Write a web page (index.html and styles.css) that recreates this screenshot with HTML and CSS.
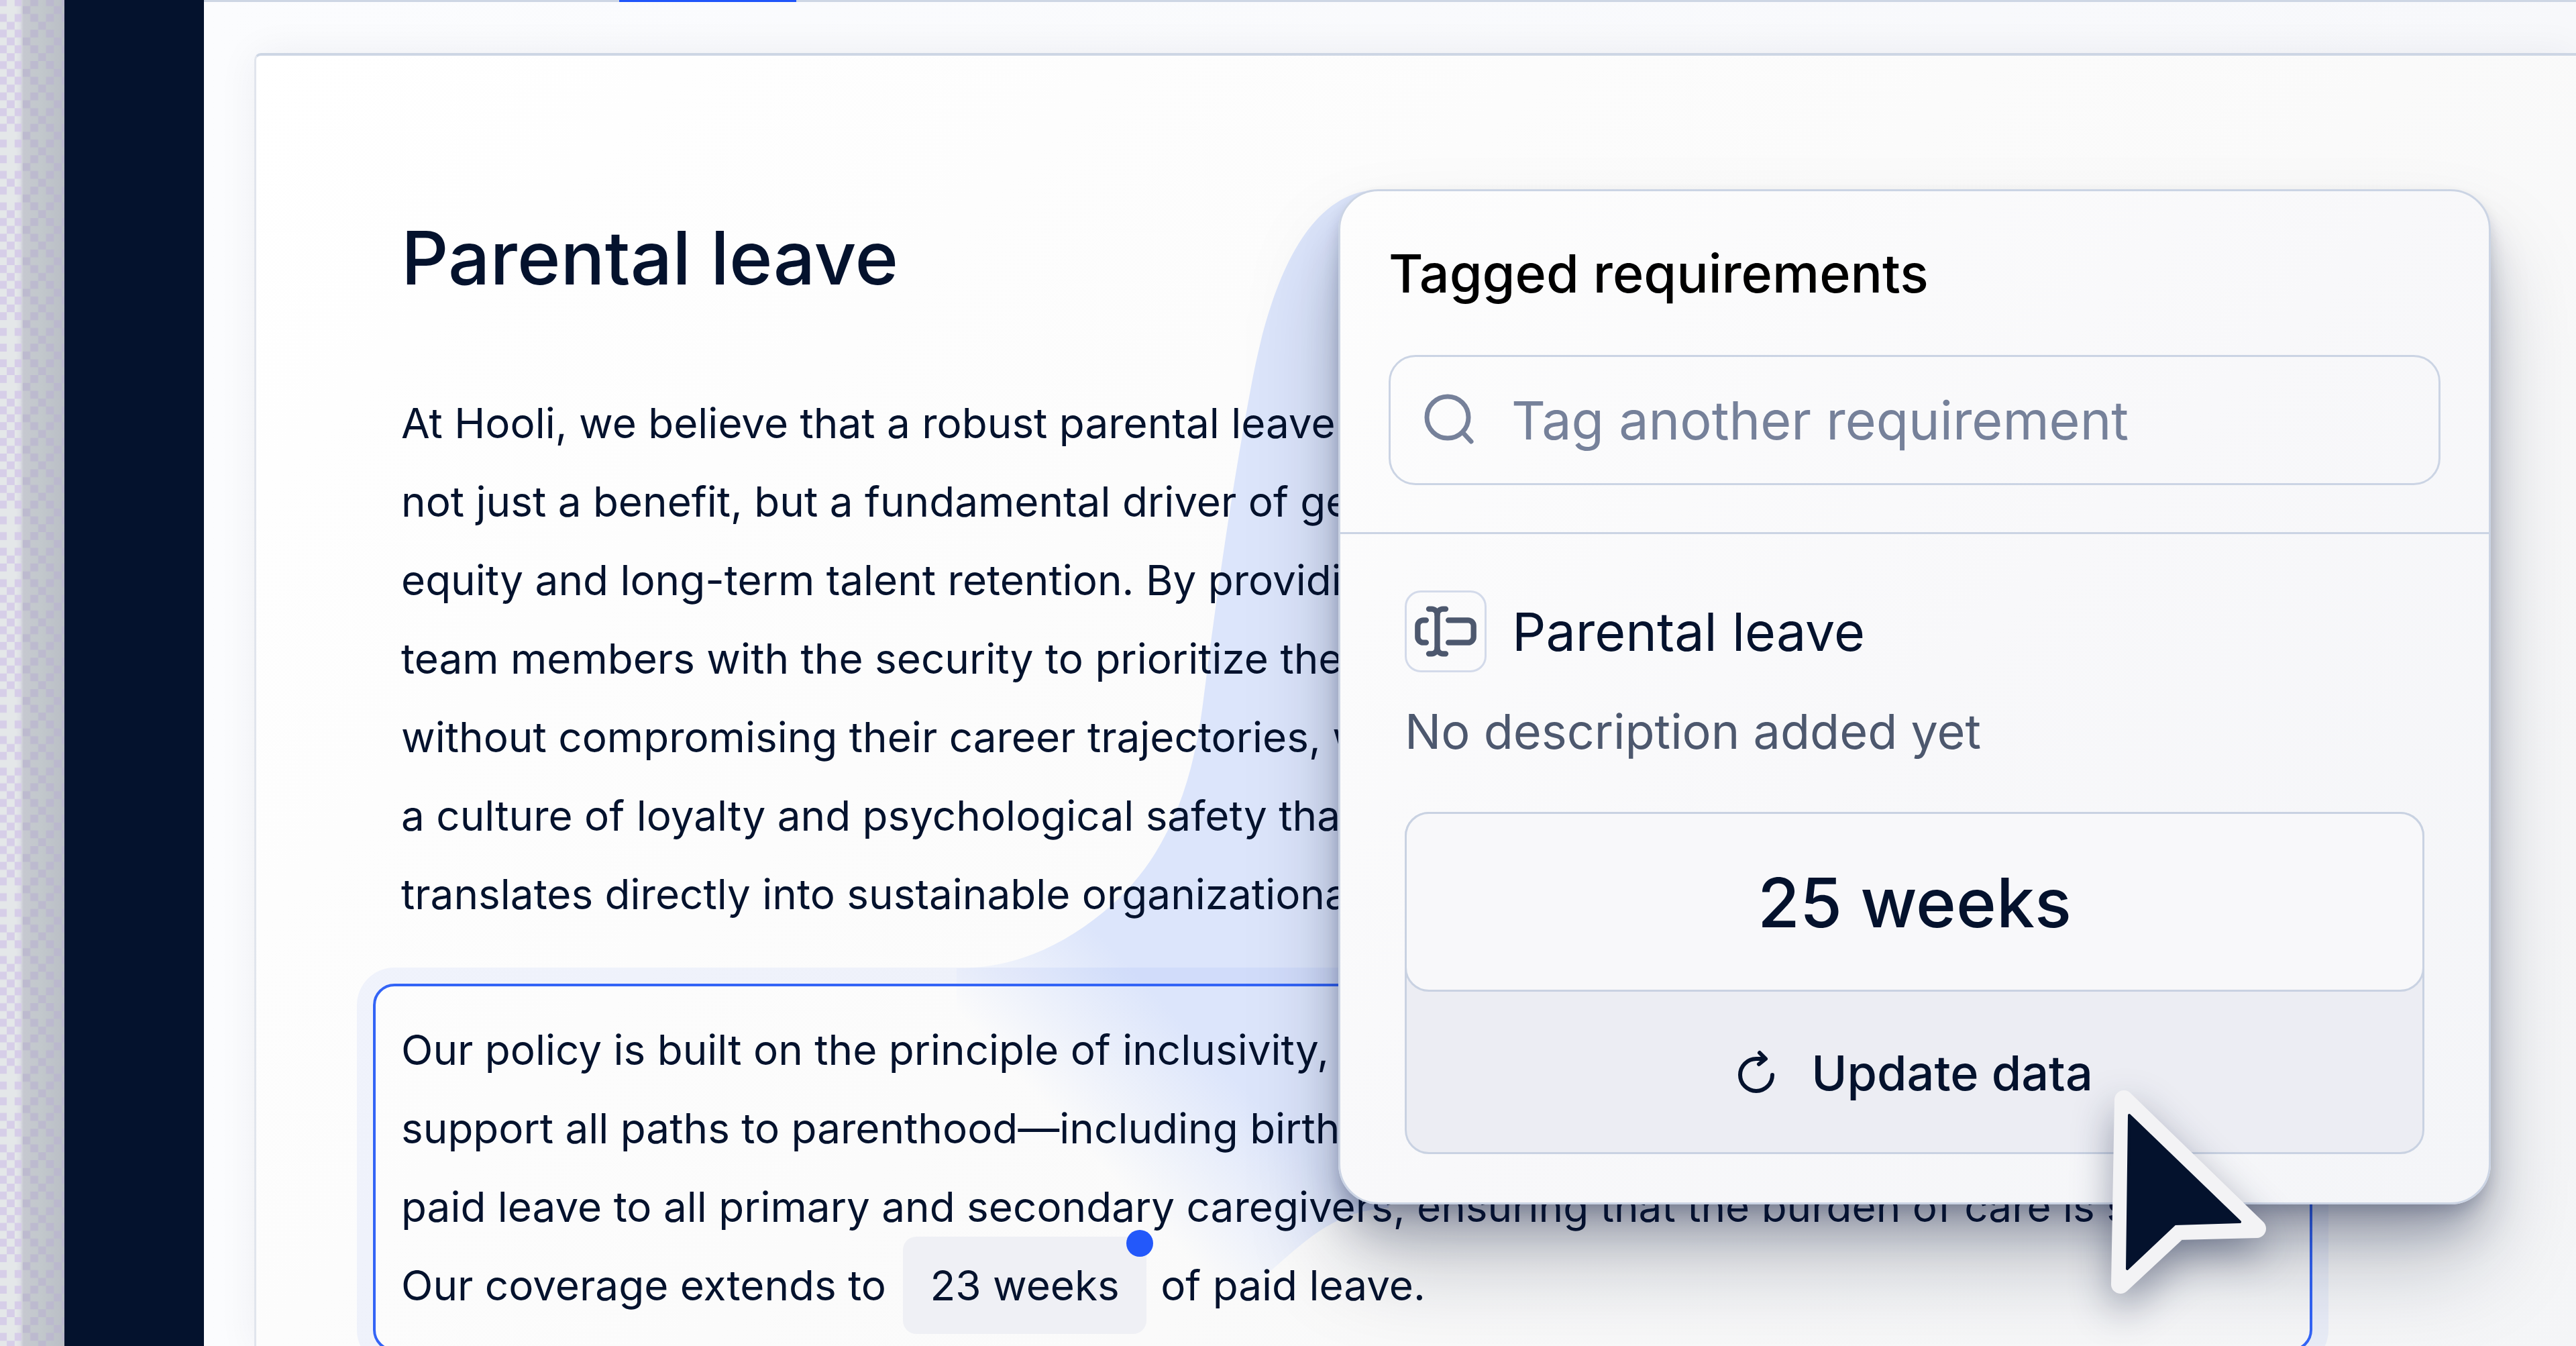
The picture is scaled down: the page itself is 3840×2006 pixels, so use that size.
FILE: index.html
```html
<!DOCTYPE html>
<html lang="en">
<head>
<meta charset="utf-8">
<title>Parental leave</title>
<link rel="stylesheet" href="styles.css">
</head>
<body>
<div class="app">
  <div class="backdrop">
    <svg class="checker" width="96" height="100%" aria-hidden="true">
      <defs>
        <pattern id="light" width="23.4" height="280.8" patternUnits="userSpaceOnUse" x="-1.6" y="-2.6">
          <path fill="#d4c9e8" d="M0 0h11.7v11.7H0zM0 23.4h11.7v11.7H0zM0 46.8h11.7v11.7H0zM0 70.2h11.7v11.7H0zM0 93.6h11.7v11.7H0zM0 117h11.7v11.7H0zM0 140.4h11.7v11.7H0zM0 163.8h11.7v11.7H0zM0 187.2h11.7v11.7H0zM0 210.6h11.7v11.7H0zM0 234h11.7v11.7H0zM0 257.4h11.7v11.7H0zM11.7 35.1h11.7v11.7H11.7zM11.7 58.5h11.7v11.7H11.7zM11.7 81.9h11.7v11.7H11.7zM11.7 105.3h11.7v11.7H11.7zM11.7 128.7h11.7v11.7H11.7zM11.7 152.1h11.7v11.7H11.7zM11.7 175.5h11.7v11.7H11.7zM11.7 269.1h11.7v11.7H11.7z"/>
        </pattern>
        <pattern id="dark" width="46.8" height="46.8" patternUnits="userSpaceOnUse" x="33.5" y="-2.6">
          <path fill="#bab5cf" d="M11.7 0h11.7v11.7H11.7zM35.1 0h11.7v11.7H35.1zM11.7 23.4h11.7v11.7H11.7zM35.1 23.4h11.7v11.7H35.1zM0 11.7h11.7v11.7H0zM23.4 35.1h11.7v11.7H23.4z"/>
        </pattern>
      </defs>
      <rect width="32" height="100%" fill="url(#light)" opacity=".85"/>
      <rect x="34" width="62" height="100%" fill="url(#dark)" opacity=".75"/>
    </svg>
  </div>
  <aside class="sidebar"></aside>
  <main class="main">
    <div class="tabs"><span class="tab-active"></span></div>
    <article class="sheet">
      <svg class="connector" width="1700" height="1760" viewBox="380 260 1700 1760" aria-hidden="true">
        <defs>
          <linearGradient id="fade" gradientUnits="userSpaceOnUse" x1="1560" y1="1650" x2="1730" y2="1490">
            <stop offset="0" stop-color="#dce5fb" stop-opacity="0"/>
            <stop offset="1" stop-color="#dce5fb"/>
          </linearGradient>
        </defs>
        <path fill="url(#fade)" d="M2050 283C1940 290 1890 440 1865 576C1834 740 1811 908 1793 1050C1775 1190 1730 1290 1644 1360C1580 1412 1510 1443 1426 1443V1940H1840C1930 1870 1970 1806 2070 1800V283Z"/>
      </svg>
      <h1 class="title">Parental leave</h1>
      <p class="copy">At Hooli, we believe that a robust parental leave<br>not just a benefit, but a fundamental driver of gender<br>equity and long-term talent retention. By providing<br>team members with the security to prioritize the<br>without compromising their career trajectories, we<br>a culture of loyalty and psychological safety that<br>translates directly into sustainable organizational</p>
      <p class="copy selected">Our policy is built on the principle of inclusivity, made<br>support all paths to parenthood—including birth<br>paid leave to all primary and secondary caregivers, ensuring that the burden of care is share<br>Our coverage extends to <span class="chip">23 weeks<span class="dot"></span></span> of paid leave.</p>

      <section class="popover">
        <header class="popover-head">
          <h2 class="popover-title">Tagged requirements</h2>
          <label class="search">
            <svg class="search-icon" width="84" height="84" viewBox="0 0 84 84" fill="none" stroke="currentColor" stroke-width="7" stroke-linecap="round" aria-hidden="true"><circle cx="37" cy="38" r="31"/><path d="M60 61L72 74"/></svg>
            <input class="search-input" type="text" placeholder="Tag another requirement" aria-label="Tag another requirement">
          </label>
        </header>
        <div class="requirement">
          <div class="req-head">
            <span class="req-icon">
              <svg width="100" height="100" viewBox="0 0 24 24" fill="none" stroke="currentColor" stroke-width="2" stroke-linecap="round" stroke-linejoin="round" aria-hidden="true"><path d="M12 20h-1a2 2 0 0 1-2-2 2 2 0 0 1-2 2H6"/><path d="M13 8h7a2 2 0 0 1 2 2v4a2 2 0 0 1-2 2h-7"/><path d="M5 16H4a2 2 0 0 1-2-2v-4a2 2 0 0 1 2-2h1"/><path d="M6 4h1a2 2 0 0 1 2 2 2 2 0 0 1 2-2h1"/><path d="M9 6v12"/></svg>
            </span>
            <h3 class="req-name">Parental leave</h3>
          </div>
          <p class="req-desc">No description added yet</p>
          <div class="value-card">
            <div class="value">25 weeks</div>
            <button class="update" type="button">
              <svg width="60" height="68" viewBox="0 0 60 68" fill="none" stroke="currentColor" stroke-width="6" stroke-linecap="round" stroke-linejoin="round" aria-hidden="true"><path d="M54 38A24 24 0 1 1 30 14H42"/><path d="M35 5L44 14L34 22"/></svg>
              <span>Update data</span>
            </button>
          </div>
        </div>
      </section>

      <svg class="pointer" width="300" height="360" viewBox="3120 1600 300 360" aria-hidden="true">
        <path d="M3166 1639L3364 1831L3247 1834L3161 1914Z" fill="#f3f3f5" stroke="#f3f3f5" stroke-width="28" stroke-linejoin="round"/>
        <path d="M3174 1662L3339 1821L3242 1824L3171 1891Z" fill="#04122d" stroke="#04122d" stroke-width="4" stroke-linejoin="round"/>
      </svg>
    </article>
  </main>
</div>
</body>
</html>
```
FILE: styles.css
```css
* { box-sizing: border-box; margin: 0; padding: 0; }

body {
  font-family: Inter, "Liberation Sans", sans-serif;
  color: #04122d;
}

.app {
  display: flex;
  height: 100vh;
  overflow: hidden;
}

.backdrop {
  flex: 0 0 96px;
  background: linear-gradient(90deg, #e4e7e9 0 24px, #dddfe5 30px, #c6c8d0 35px, #c2c8cc 60px, #babec6 96px);
}

.checker { display: block; }

.sidebar {
  flex: 0 0 208px;
  background: #04122d;
}

.main {
  flex: 1;
  min-width: 0;
  display: flex;
  flex-direction: column;
  background: linear-gradient(90deg, #fbfcfe, #f7f8fb);
}

.tabs {
  flex: none;
  display: flex;
  height: 3px;
  padding-left: 619px;
  background: #cdd6e4;
}

.tab-active {
  width: 264px;
  background: #1f55fa;
}

.sheet {
  position: relative;
  flex: 1 0 auto;
  margin: 76px 0 0 75px;
  padding: 233px 393px 0 174px;
  border-top: 4px solid #cdd6e4;
  border-left: 3px solid #e1e5ed;
  border-top-left-radius: 10px;
  background: linear-gradient(135deg, #ffffff, #fafafa 60%, #f4f5f7);
  box-shadow: 0 0 60px rgba(20, 30, 60, 0.06);
}

.connector {
  position: absolute;
  left: -2px;
  top: 177px;
}

.title {
  position: relative;
  padding-left: 42px;
  font-size: 110px;
  line-height: 136px;
  font-weight: 500;
}

.copy {
  position: relative;
  margin-top: 120px;
  padding-left: 42px;
  font-size: 62px;
  line-height: 117px;
  white-space: nowrap;
}

.selected {
  margin-top: 75px;
  padding: 36px 38px;
  border: 4px solid #3364f6;
  border-radius: 32px;
  box-shadow: 0 0 0 24px rgba(37, 90, 245, 0.06);
}

.chip {
  position: relative;
  margin: 0 4px 0 8px;
  padding: 35px 40px;
  border-radius: 20px;
  background: #eff0f5;
}

.dot {
  position: absolute;
  top: -10px;
  right: -10px;
  width: 40px;
  height: 40px;
  border-radius: 50%;
  background: #2358fa;
}

.popover {
  position: absolute;
  left: 1613px;
  top: 199px;
  width: 1718px;
  border: 3px solid #cbd4e4;
  border-radius: 60px;
  background: linear-gradient(135deg, #fdfdfd, #f8f8fa 50%, #f4f5f8);
  box-shadow: 0 12px 24px -4px rgba(10, 22, 60, 0.2), 0 48px 64px -12px rgba(10, 22, 60, 0.26), 0 90px 140px -10px rgba(10, 22, 50, 0.26);
}

.popover-head {
  padding: 70px 72px 70px;
  border-bottom: 3px solid #cbd4e4;
}

.popover-title {
  font-size: 79px;
  line-height: 104px;
  font-weight: 500;
  color: #000000;
}

.search {
  display: flex;
  align-items: center;
  gap: 48px;
  height: 194px;
  margin-top: 70px;
  padding: 0 48px;
  border: 3px solid #cbd4e4;
  border-radius: 40px;
  color: #76819a;
}

.search-icon { flex: none; }

.search-input {
  flex: 1;
  min-width: 0;
  border: 0;
  outline: 0;
  background: transparent;
  font: inherit;
  font-size: 79px;
  color: #04122d;
}

.search-input::placeholder { color: #76819a; opacity: 1; }

.requirement { padding: 84px 96px 72px; }

.req-head {
  display: flex;
  align-items: center;
  gap: 38px;
}

.req-icon {
  display: flex;
  align-items: center;
  justify-content: center;
  width: 122px;
  height: 122px;
  border: 3px solid #d3daea;
  border-radius: 24px;
  color: #4d586e;
}

.req-name {
  font-size: 79px;
  line-height: 104px;
  font-weight: 400;
}

.req-desc {
  margin-top: 38px;
  font-size: 72px;
  line-height: 100px;
  color: #4d586e;
}

.value-card {
  margin-top: 70px;
  border: 3px solid #c9d2e2;
  border-radius: 36px;
  background: #ecedf3;
}

.value {
  margin: -3px;
  padding: 68px 0 66px;
  border: 3px solid #c9d2e2;
  border-radius: 36px;
  background: #f8f8fa;
  font-size: 102px;
  line-height: 128px;
  font-weight: 500;
  text-align: center;
}

.update {
  display: flex;
  align-items: center;
  justify-content: center;
  gap: 52px;
  width: 100%;
  height: 242px;
  padding-top: 4px;
  border: 0;
  background: transparent;
  font: inherit;
  font-size: 72px;
  font-weight: 500;
  color: inherit;
}

.pointer {
  position: absolute;
  left: 2738px;
  top: 1517px;
  overflow: visible;
  filter: drop-shadow(0 24px 30px rgba(10, 22, 60, 0.4));
}
```
